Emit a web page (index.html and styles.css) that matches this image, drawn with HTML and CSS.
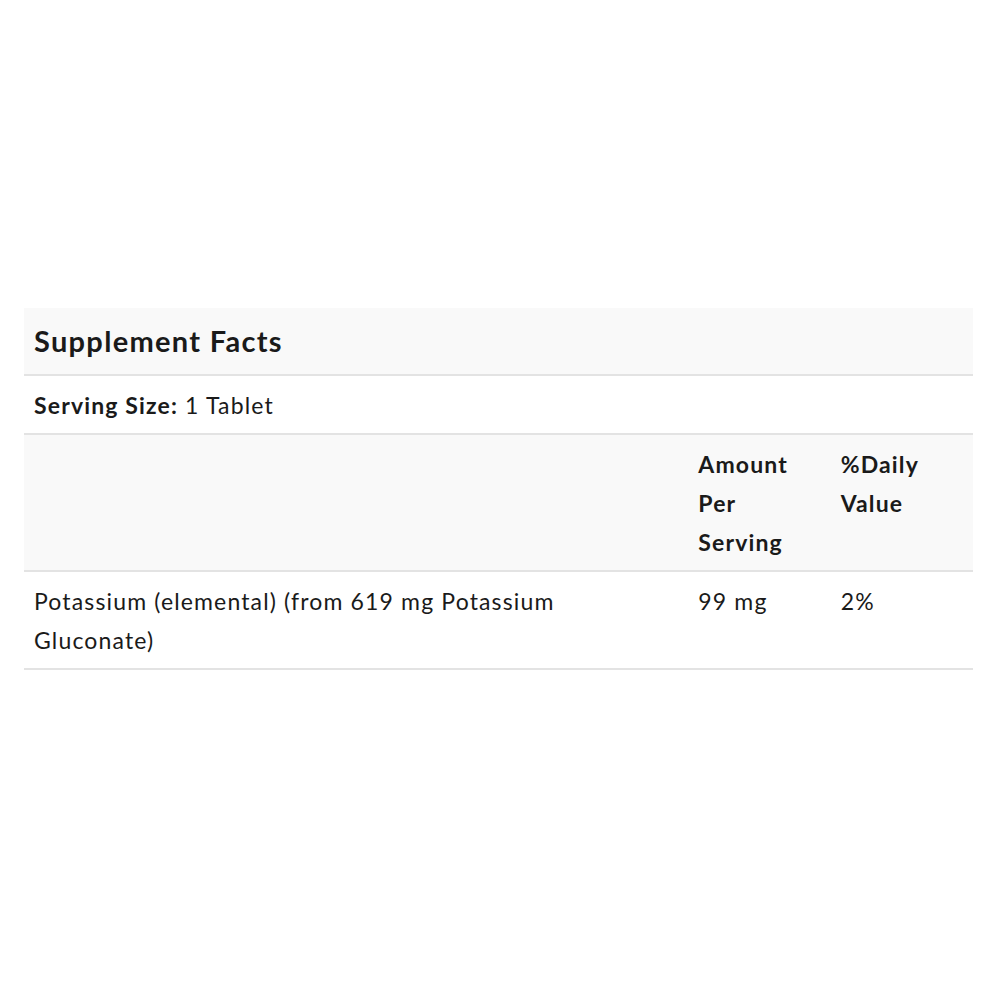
FILE: index.html
```html
<!DOCTYPE html>
<html>
<head>
<meta charset="utf-8">
<link rel="stylesheet" href="styles.css">
</head>
<body>
<div class="page">
  <table class="facts">
    <colgroup>
      <col class="c-name">
      <col class="c-amt">
      <col class="c-dv">
    </colgroup>
    <tr class="title-row"><th colspan="3">Supplement Facts</th></tr>
    <tr class="serving-row"><td colspan="3"><b>Serving Size:</b> 1 Tablet</td></tr>
    <tr class="head-row"><th></th><th>Amount Per Serving</th><th>%Daily Value</th></tr>
    <tr class="data-row"><td>Potassium (elemental) (from 619 mg Potassium Gluconate)</td><td>99 mg</td><td>2%</td></tr>
  </table>
</div>
</body>
</html>
```
FILE: styles.css
```css
html, body { margin: 0; padding: 0; background: #fff; }
body { font-family: Lato, "Open Sans", sans-serif; color: #1a1a1a; }
.page { padding: 308px 27px 0 24px; }
.facts { width: 949px; border-collapse: collapse; table-layout: fixed; font-size: 23px; line-height: 39px; letter-spacing: 1.15px; }
.c-name { width: 70%; }
.c-amt { width: 15%; }
.c-dv { width: 15%; }
.facts th, .facts td { padding: 10px 10px 8px; text-align: left; vertical-align: top; border-bottom: 2px solid #e3e3e3; }
.facts th { font-weight: 700; }
.title-row th { background: #f9f9f9; font-size: 29px; line-height: 47px; letter-spacing: 1.3px; padding: 9px 10px 10px; }
.head-row th { background: #f9f9f9; }
.serving-row td b { font-weight: 700; }
```
